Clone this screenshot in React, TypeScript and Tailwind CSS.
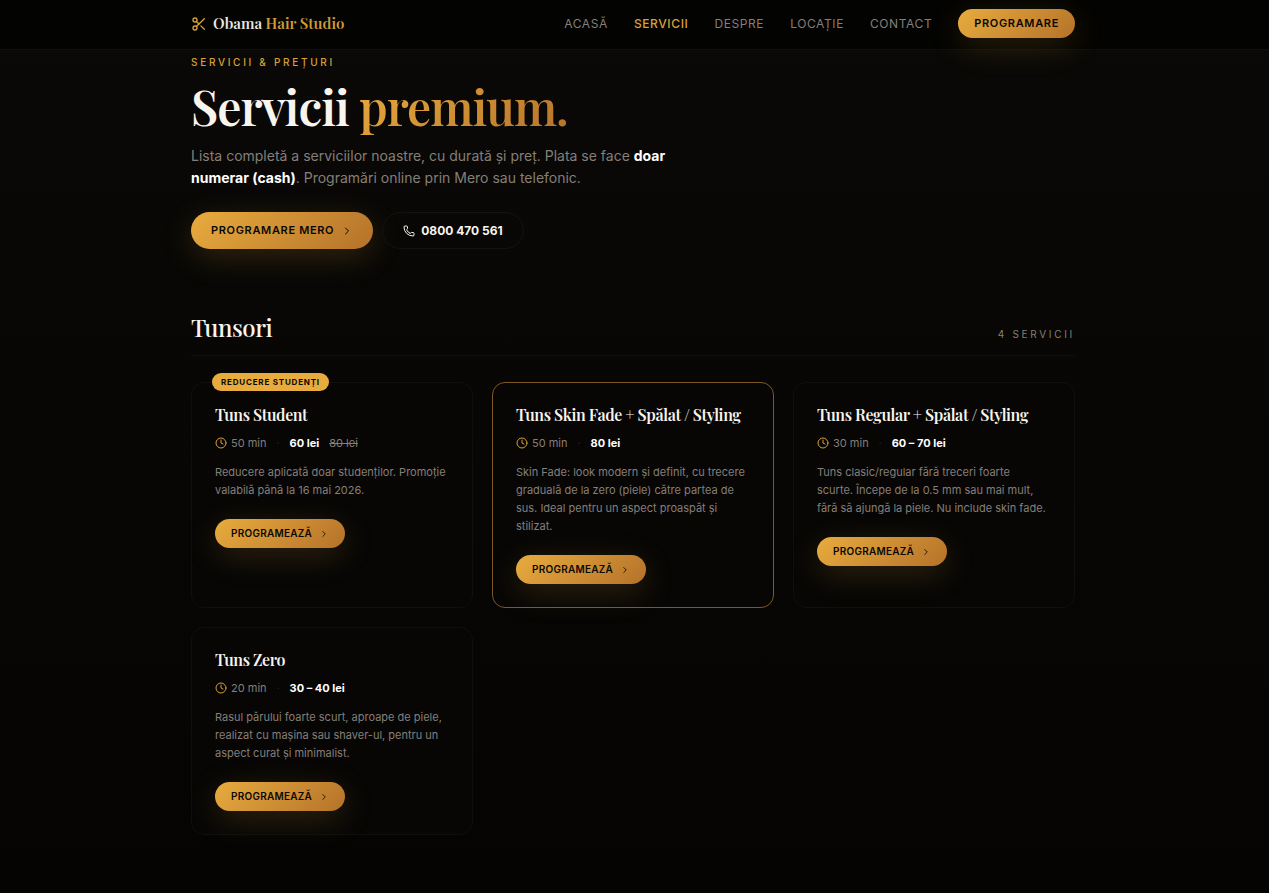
import type { ReactNode } from "react";
import { ChevronRight, Clock, Phone, Scissors } from "lucide-react";

type Service = {
  name: string;
  minutes: number;
  price: string;
  oldPrice?: string;
  desc: string;
  badge?: string;
  featured?: boolean;
};

const NAV = [
  { label: "Acasă", href: "#acasa" },
  { label: "Servicii", href: "#servicii", active: true },
  { label: "Despre", href: "#despre" },
  { label: "Locație", href: "#locatie" },
  { label: "Contact", href: "#contact" },
];

const SERVICES: Service[] = [
  {
    name: "Tuns Student",
    minutes: 50,
    price: "60 lei",
    oldPrice: "80 lei",
    desc: "Reducere aplicată doar studenților. Promoție valabilă până la 16 mai 2026.",
    badge: "Reducere studenți",
  },
  {
    name: "Tuns Skin Fade + Spălat / Styling",
    minutes: 50,
    price: "80 lei",
    desc: "Skin Fade: look modern și definit, cu trecere graduală de la zero (piele) către partea de sus. Ideal pentru un aspect proaspăt și stilizat.",
    featured: true,
  },
  {
    name: "Tuns Regular + Spălat / Styling",
    minutes: 30,
    price: "60 – 70 lei",
    desc: "Tuns clasic/regular fără treceri foarte\nscurte. Începe de la 0.5 mm sau mai mult,\nfără să ajungă la piele. Nu include skin fade.",
  },
  {
    name: "Tuns Zero",
    minutes: 20,
    price: "30 – 40 lei",
    desc: "Rasul părului foarte scurt, aproape de piele, realizat cu mașina sau shaver-ul, pentru un aspect curat și minimalist.",
  },
];

export default function App() {
  return (
    <div className="min-h-screen bg-linear-to-b from-[#0a0907] to-[#050403] font-[Inter,sans-serif] text-[#f8f4ee]">
      <Header />
      <main className="pb-[60px]">
        <Container>
          <Hero />
          <ServiceList />
        </Container>
      </main>
    </div>
  );
}

function Container({ children }: { children: ReactNode }) {
  return <div className="mx-auto max-w-[887px] pr-[3px]">{children}</div>;
}

function Header() {
  return (
    <header className="border-b border-[#100f0d] bg-[#030301] pb-[2px]">
      <Container>
        <div className="flex h-[47px] items-center justify-between">
          <a
            href="#acasa"
            className="flex items-center gap-[6px] font-['Playfair_Display','Liberation_Serif',serif] text-[15px] font-semibold text-[#ebe7e0]"
          >
            <Scissors size={16} className="text-[#d9a036]" />
            <span>
              Obama <span className="text-[#d39a35]">Hair Studio</span>
            </span>
          </a>
          <nav className="flex items-center gap-[26px] text-xs tracking-wider text-[#857f78] uppercase">
            {NAV.map((n) => (
              <a key={n.label} href={n.href} className={n.active ? "font-medium text-[#d9a036]" : ""}>
                {n.label}
              </a>
            ))}
            <GoldLink className="h-[29px] px-4 text-[11px] tracking-[0.06em]">Programare</GoldLink>
          </nav>
        </div>
      </Container>
    </header>
  );
}

function Hero() {
  return (
    <section className="pt-1">
      <p className="text-[10px] leading-4 font-medium tracking-[0.27em] text-[#d9a036] uppercase">
        Servicii &amp; prețuri
      </p>
      <h1 className="mt-2 font-['Playfair_Display','Liberation_Serif',serif] text-5xl leading-[56px] font-semibold tracking-[-0.02em]">
        Servicii{" "}
        <span className="bg-linear-135 from-[#e8ac3e] to-[#b5722a] bg-clip-text text-transparent">premium.</span>
      </h1>
      <p className="mt-[11px] max-w-[512px] text-[14px] leading-[22px] text-[#857f78]">
        Lista completă a serviciilor noastre, cu durată și preț. Plata se face{" "}
        <strong className="font-bold text-white">doar numerar (cash)</strong>. Programări online prin Mero sau telefonic.
      </p>
      <div className="mt-[23px] flex items-center gap-[9px]">
        <GoldLink className="h-[37px] gap-[7px] px-5 text-[11px] tracking-[0.06em]">
          Programare Mero
          <ChevronRight size={12} />
        </GoldLink>
        <a
          href="tel:0800470561"
          className="flex h-[37px] items-center gap-[6px] rounded-full border border-[#141311] px-5 text-[12px] font-bold"
        >
          <Phone size={12} />
          0800 470 561
        </a>
      </div>
    </section>
  );
}

function ServiceList() {
  return (
    <section id="servicii" className="pt-[63px]">
      <div className="flex items-end justify-between border-b border-[#100f0d] pb-[13px]">
        <h2 className="font-['Playfair_Display','Liberation_Serif',serif] text-2xl leading-[30px] font-medium tracking-[-0.02em]">
          Tunsori
        </h2>
        <span className="text-[10px] leading-4 tracking-[0.27em] text-[#857f78] uppercase">
          {SERVICES.length} servicii
        </span>
      </div>
      <div className="mt-[26px] grid grid-cols-3 gap-[19px]">
        {SERVICES.map((s) => (
          <ServiceCard key={s.name} service={s} />
        ))}
      </div>
    </section>
  );
}

function ServiceCard({ service: s }: { service: Service }) {
  return (
    <article
      className={`relative rounded-[13px] border bg-[#070605] px-[23px] pt-[22px] pb-[23px] ${
        s.featured ? "border-[#7c5a20]" : "border-[#100f0d]"
      }`}
    >
      {s.badge && (
        <span className="absolute -top-[10px] left-5 flex h-[18px] items-center rounded-full bg-[#e8ac3e] px-[9px] text-[8px] font-bold tracking-[0.1em] whitespace-nowrap text-[#0a0805] uppercase">
          {s.badge}
        </span>
      )}
      <h3 className="font-['Playfair_Display','Liberation_Serif',serif] text-base leading-5 font-semibold tracking-tight">
        {s.name}
      </h3>
      <div className="mt-[9px] flex items-center text-[11px] leading-[18px] text-[#857f78]">
        <Clock size={12} className="mr-1 text-[#d9a036]" />
        {s.minutes} min
        <span className="w-[23px] text-center text-[#24221f]">·</span>
        <span className="font-bold text-white">{s.price}</span>
        {s.oldPrice && <del className="ml-[10px]">{s.oldPrice}</del>}
      </div>
      <p className="mt-[11px] text-[11px] leading-[18px] whitespace-pre-line text-[#857f78]">{s.desc}</p>
      <div className="mt-5 flex">
        <GoldLink className="h-[29px] gap-[7px] px-4 text-[10px] tracking-wide">
          Programează
          <ChevronRight size={10} />
        </GoldLink>
      </div>
    </article>
  );
}

function GoldLink({ className, children }: { className: string; children: ReactNode }) {
  return (
    <a
      href="#programare"
      className={`flex items-center rounded-full bg-linear-135 from-[#e8ac3e] to-[#b5722a] font-semibold text-[#0a0805] uppercase shadow-[0_8px_32px_rgba(232,172,62,0.18)] ${className}`}
    >
      {children}
    </a>
  );
}
